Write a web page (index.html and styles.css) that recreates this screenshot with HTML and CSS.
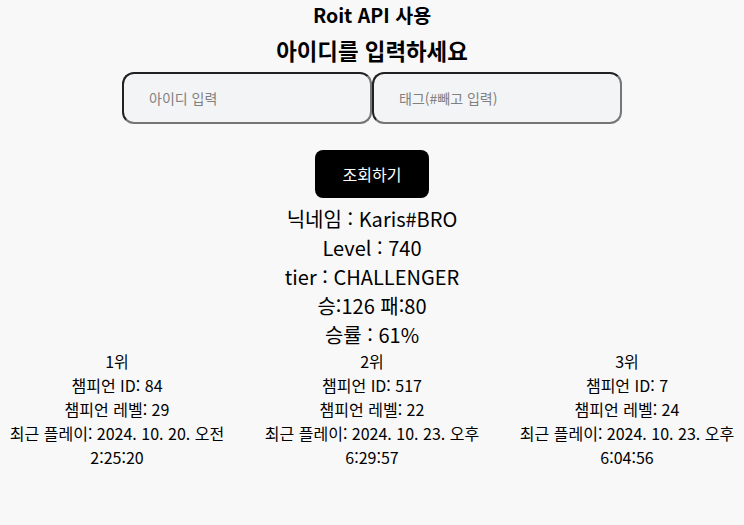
FILE: index.html
```html
<!DOCTYPE html>
<html lang="ko">
<head>
<meta charset="utf-8">
<title>Roit API 사용</title>
<link rel="stylesheet" href="styles.css">
</head>
<body>
<div class="app">
  <h3 class="title">Roit API 사용</h3>
  <h2 class="subtitle">아이디를 입력하세요</h2>
  <div class="inputs">
    <input class="field" type="text" placeholder="아이디 입력">
    <input class="field" type="text" placeholder="태그(#빼고 입력)">
  </div>
  <button class="search">조회하기</button>
  <div class="info">
    <p>닉네임 : Karis#BRO</p>
    <p>Level : 740</p>
    <p>tier : CHALLENGER</p>
    <p>승:126 패:80</p>
    <p>승률 : 61%</p>
  </div>
  <div class="ranks">
    <div class="rank">
      <p>1위</p>
      <p>챔피언 ID: 84</p>
      <p>챔피언 레벨: 29</p>
      <p>최근 플레이: 2024. 10. 20. 오전 2:25:20</p>
    </div>
    <div class="rank">
      <p>2위</p>
      <p>챔피언 ID: 517</p>
      <p>챔피언 레벨: 22</p>
      <p>최근 플레이: 2024. 10. 23. 오후 6:29:57</p>
    </div>
    <div class="rank">
      <p>3위</p>
      <p>챔피언 ID: 7</p>
      <p>챔피언 레벨: 24</p>
      <p>최근 플레이: 2024. 10. 23. 오후 6:04:56</p>
    </div>
  </div>
</div>
</body>
</html>
```

FILE: styles.css
```css
html, body {
  margin: 0;
  padding: 0;
  background: #f8f8f8;
}
body {
  font-family: "Noto Sans CJK KR", "Noto Sans", sans-serif;
  color: #000;
}
.app {
  display: flex;
  flex-direction: column;
  align-items: center;
  padding: 0 8px;
}
.title {
  margin: 0;
  font-size: 19.5px;
  font-weight: 700;
  line-height: normal;
}
.subtitle {
  margin: 5px 0 0;
  font-size: 22.4px;
  font-weight: 700;
  line-height: 32px;
}
.inputs {
  display: flex;
  margin-top: 6px;
}
.field {
  width: 250px;
  height: 52px;
  box-sizing: border-box;
  border: 2px inset #767676;
  border-radius: 12px;
  background: #f3f4f6;
  padding: 0 25px;
  font-family: "Noto Sans CJK KR", sans-serif;
  font-size: 14px;
  outline: none;
}
.field::placeholder {
  color: #808080;
}
.search {
  margin-top: 26px;
  width: 114px;
  height: 48px;
  border: none;
  border-radius: 8px;
  background: #000;
  color: #fff;
  font-family: "Noto Sans CJK KR", sans-serif;
  font-size: 16px;
}
.info {
  margin-top: 6px;
  text-align: center;
}
.info p {
  margin: 0;
  font-size: 20px;
  line-height: 29px;
}
.ranks {
  display: flex;
  justify-content: space-between;
  align-self: stretch;
}
.rank {
  width: 218px;
  text-align: center;
  word-break: keep-all;
}
.rank p {
  margin: 0;
  font-size: 16px;
  line-height: 24px;
}
```
